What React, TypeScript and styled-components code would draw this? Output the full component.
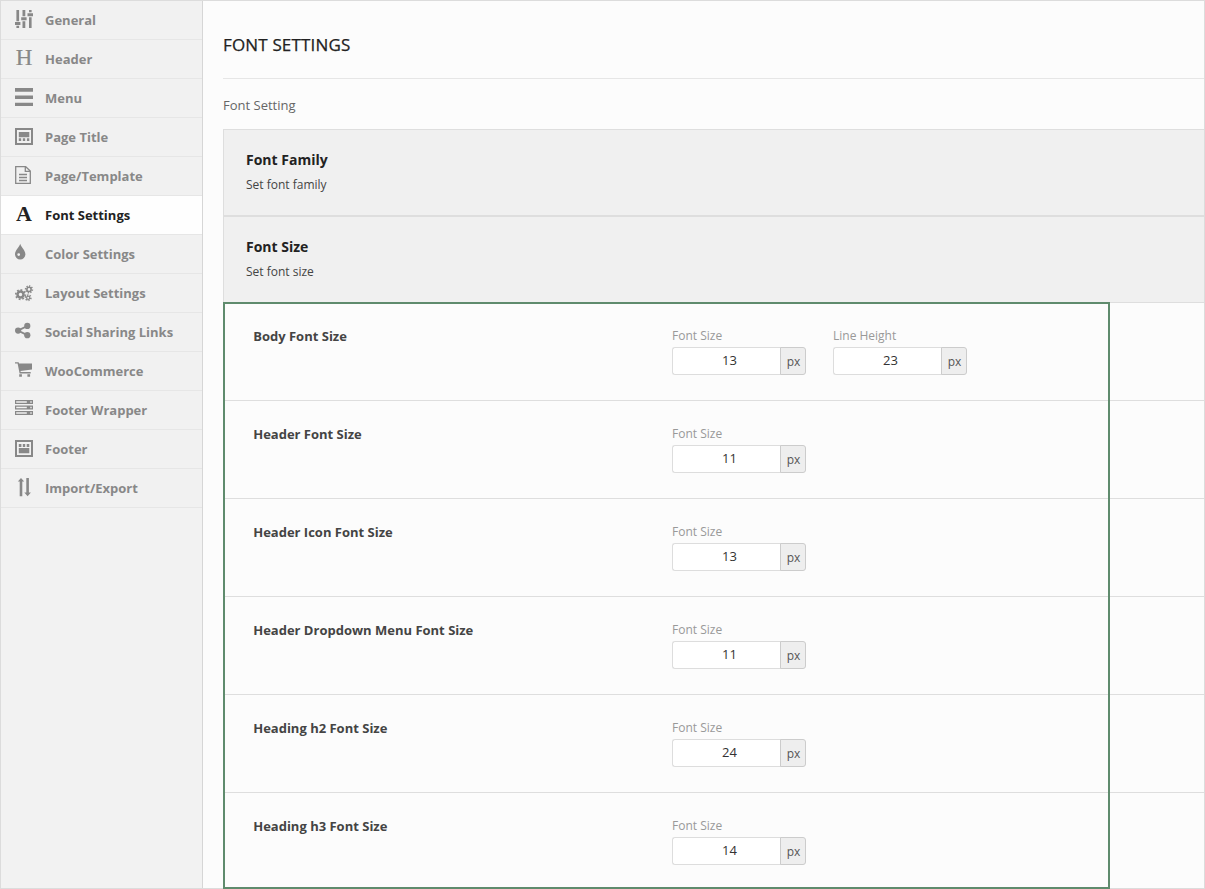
import React from 'react';
import styled, { createGlobalStyle } from 'styled-components';

const GlobalStyle = createGlobalStyle`
  * { box-sizing: border-box; }
  body {
    margin: 0;
    background: #fcfcfc;
    font-family: 'Open Sans', 'Noto Sans', sans-serif;
    overflow: hidden;
  }
`;

const Page = styled.div`
  display: flex;
  width: 1205px;
  height: 889px;
  border: 1px solid #dcdcdc;
  background: #fcfcfc;
`;

const Sidebar = styled.nav`
  flex: none;
  width: 202px;
  background: #f2f2f2;
  border-right: 1px solid #d6d6d6;
`;

const NavItem = styled.a<{ $active?: boolean }>`
  display: flex;
  height: 39px;
  padding-left: 14px;
  border-bottom: 1px solid #e6e6e6;
  background: ${p => (p.$active ? '#fefefe' : '#f1f1f1')};
  color: ${p => (p.$active ? '#222' : '#888')};
`;

const IconSlot = styled.span`
  flex: none;
  width: 30px;
  height: 38px;
  svg { display: block; }
`;

const NavLabel = styled.span`
  font-size: 13px;
  font-weight: 700;
  line-height: 38px;
  white-space: nowrap;
`;

const Main = styled.main`
  flex: 1;
  min-width: 0;
  padding-left: 20px;
`;

const Title = styled.h1`
  margin: 0;
  height: 78px;
  border-bottom: 1px solid #e6e6e6;
  color: #222;
  font-size: 17px;
  font-weight: 500;
  letter-spacing: 0.16px;
  line-height: 88px;
  -webkit-text-stroke: 0.25px currentColor;
`;

const Intro = styled.p`
  margin: 0;
  height: 50px;
  color: #666;
  font-size: 13px;
  line-height: 52px;
`;

const Section = styled.section`
  height: 87px;
  padding: 20px 22px 0;
  border: solid #dedede;
  border-width: 1px 0 1px 1px;
  background: #f0f0f0;
`;

const SectionTitle = styled.h2`
  margin: 0;
  color: #222;
  font-size: 14px;
  font-weight: 700;
  line-height: 20px;
`;

const SectionText = styled.p`
  margin: 5px 0 0;
  color: #444;
  font-size: 12px;
  line-height: 20px;
`;

const Settings = styled.div`
  position: relative;
  margin-top: -1px;
  border-top: 1px solid #dedede;
`;

const Highlight = styled.div`
  position: absolute;
  top: -1px;
  left: 0;
  width: 887px;
  height: 587px;
  border: 2px solid #5f8b6d;
  pointer-events: none;
`;

const Row = styled.div<{ $last?: boolean }>`
  display: flex;
  height: ${p => (p.$last ? 95 : 98)}px;
  padding-left: 30.2px;
  border-bottom: ${p => (p.$last ? 0 : 1)}px solid #dedede;
`;

const RowTitle = styled.h3`
  flex: none;
  width: 418.8px;
  margin: 0;
  padding-top: 23px;
  color: #444;
  font-size: 13px;
  font-weight: 700;
  line-height: 20px;
`;

const Field = styled.label`
  display: block;
  width: 134px;
  margin-right: 27px;
  padding-top: 23px;
`;

const FieldLabel = styled.span`
  display: block;
  height: 21px;
  color: #999;
  font-size: 12px;
  line-height: 20px;
`;

const Control = styled.span`
  display: flex;
  height: 28px;
`;

const Value = styled.input`
  width: 109px;
  height: 28px;
  padding: 0 0 2px 5px;
  border: 1px solid #ddd;
  border-right: 0;
  border-radius: 3px 0 0 3px;
  background: #fff;
  color: #333;
  font: 13px 'Open Sans', 'Noto Sans', sans-serif;
  text-align: center;
`;

const Unit = styled.span`
  flex: 1;
  height: 28px;
  margin-left: -1px;
  padding-left: 1px;
  border: 1px solid #ccc;
  border-radius: 0 3px 3px 0;
  background: #eee;
  color: #555;
  font-size: 12px;
  line-height: 28px;
  text-align: center;
`;

const Letter = styled.span<{ $bold?: boolean }>`
  display: block;
  width: 18px;
  font-family: 'Liberation Serif', serif;
  font-size: ${p => (p.$bold ? 22 : 23)}px;
  font-weight: ${p => (p.$bold ? 700 : 400)};
  line-height: 35px;
  text-align: center;
  -webkit-text-stroke: ${p => (p.$bold ? 0 : 0.2)}px currentColor;
`;

const Glyph = ({ children }: { children: React.ReactNode }) => (
  <svg width="20" height="38" viewBox="0 0 20 38" fill="currentColor">{children}</svg>
);

const SlidersIcon = () => (
  <Glyph>
    <path d="M1.4 9h2.7v11.2H1.4zM0 21h5.4v3H0zM1.4 24.8h2.7V27H1.4zM7.5 9h2.8v6.2H7.5zM6.2 16.2h5.4v3H6.2zM7.5 20.2h2.8V27H7.5zM14 9h2.6v2.2H14zM12.5 12.2H18v3h-5.5zM14 16.2h2.6V27H14z" />
  </Glyph>
);
const MenuIcon = () => (
  <Glyph><path d="M0 9h18v3.7H0zM0 16.6h18v3.4H0zM0 23.8h18v3.2H0z" /></Glyph>
);
const TitleIcon = () => (
  <Glyph>
    <path fillRule="evenodd" d="M0 10h18v17H0zM2 12v13h14V12z" />
    <path d="M3.8 14h10.5v5.2H3.8zM3.8 20.2h2.4V23H3.8zM7.8 20.2h2.4V23H7.8zM11.9 20.2h2.4V23h-2.4z" />
  </Glyph>
);
const FileIcon = () => (
  <Glyph>
    <path d="M.7 9.7h10L15.3 14v12.3H.7zM10.3 9.7v4.6h5M4 17.5h8M4 20.5h8M4 23.5h8" fill="none" stroke="currentColor" strokeWidth="1.3" />
  </Glyph>
);
const DropIcon = () => (
  <Glyph>
    <path fillRule="evenodd" d="M5.2 8.7C6 12.3 10.4 15.2 10.4 19.2a5.2 5.2 0 0 1-10.4 0C0 15.2 4.4 12.3 5.2 8.7zM3.7 18.2a1.4 1.4 0 1 0 0 2.8a1.4 1.4 0 0 0 0-2.8z" />
  </Glyph>
);

const Gear = ({ x, y, r, width, teeth }: { x: number; y: number; r: number; width: number; teeth: number }) => (
  <g fill="none" stroke="currentColor">
    <circle cx={x} cy={y} r={r} strokeWidth={width} />
    <circle cx={x} cy={y} r={r + width / 2 + 0.5} strokeWidth="1.6" pathLength={teeth * 2} strokeDasharray="1 1" />
  </g>
);
const CogsIcon = () => (
  <Glyph>
    <Gear x={5.5} y={20.6} r={3} width={2.5} teeth={8} />
    <Gear x={14} y={15.4} r={2.1} width={1.6} teeth={8} />
    <Gear x={13.2} y={23.8} r={1.6} width={1.2} teeth={6} />
  </Glyph>
);
const ShareIcon = () => (
  <Glyph>
    <path d="M12.3 13 2.9 17.6l9.4 4.6" fill="none" stroke="currentColor" strokeWidth="1.9" />
    <circle cx="12.3" cy="12.9" r="3.1" />
    <circle cx="3.1" cy="17.6" r="3.1" />
    <circle cx="12.3" cy="22.2" r="3.1" />
  </Glyph>
);
const CartIcon = () => (
  <Glyph>
    <path d="M0 10.3h3.6l.5 1.2H17v6L5.4 18.9l.4 1.1h9.9v1.5H4.6L2.6 11.6H0zM4.2 22.2h2.7v2.6H4.2zM12.4 22.2h2.7v2.6h-2.7z" />
  </Glyph>
);
const ServerIcon = () => (
  <Glyph>
    <path fillRule="evenodd" d="M0 9h18v4H0zM1.2 10.3v1.4h10.6v-1.4zM15.3 10.3v1.4h1.4v-1.4zM0 14.5h18v4H0zM1.2 15.8v1.4h10.6v-1.4zM15.3 15.8v1.4h1.4v-1.4zM0 20h18v4H0zM1.2 21.3v1.4h10.6v-1.4zM15.3 21.3v1.4h1.4v-1.4z" />
  </Glyph>
);
const FooterIcon = () => (
  <Glyph>
    <path fillRule="evenodd" d="M0 10h18v17H0zM2 12v13h14V12z" />
    <path d="M3.8 14h2.6v3H3.8zM7.8 14h2.4v3H7.8zM11.7 14h2.6v3h-2.6zM3.8 18h10.5v5.2H3.8z" />
  </Glyph>
);
const TransferIcon = () => (
  <Glyph>
    <path d="M6 9 9.2 12.4H7.3V27.3H4.7V12.4H2.8zM11.3 9h2.6v14.6h2L12.6 27.3 9.3 23.6h2z" />
  </Glyph>
);

const navItems: { label: string; icon: React.ReactNode; active?: boolean }[] = [
  { label: 'General', icon: <SlidersIcon /> },
  { label: 'Header', icon: <Letter>H</Letter> },
  { label: 'Menu', icon: <MenuIcon /> },
  { label: 'Page Title', icon: <TitleIcon /> },
  { label: 'Page/Template', icon: <FileIcon /> },
  { label: 'Font Settings', icon: <Letter $bold>A</Letter>, active: true },
  { label: 'Color Settings', icon: <DropIcon /> },
  { label: 'Layout Settings', icon: <CogsIcon /> },
  { label: 'Social Sharing Links', icon: <ShareIcon /> },
  { label: 'WooCommerce', icon: <CartIcon /> },
  { label: 'Footer Wrapper', icon: <ServerIcon /> },
  { label: 'Footer', icon: <FooterIcon /> },
  { label: 'Import/Export', icon: <TransferIcon /> },
];

const rows: { title: string; size: number; lineHeight?: number }[] = [
  { title: 'Body Font Size', size: 13, lineHeight: 23 },
  { title: 'Header Font Size', size: 11 },
  { title: 'Header Icon Font Size', size: 13 },
  { title: 'Header Dropdown Menu Font Size', size: 11 },
  { title: 'Heading h2 Font Size', size: 24 },
  { title: 'Heading h3 Font Size', size: 14 },
];

const PixelField = ({ label, value }: { label: string; value: number }) => (
  <Field>
    <FieldLabel>{label}</FieldLabel>
    <Control>
      <Value defaultValue={value} />
      <Unit>px</Unit>
    </Control>
  </Field>
);

export default function App() {
  return (
    <>
      <GlobalStyle />
      <Page>
        <Sidebar>
          {navItems.map(item => (
            <NavItem key={item.label} $active={item.active}>
              <IconSlot>{item.icon}</IconSlot>
              <NavLabel>{item.label}</NavLabel>
            </NavItem>
          ))}
        </Sidebar>
        <Main>
          <Title>FONT SETTINGS</Title>
          <Intro>Font Setting</Intro>
          <Section>
            <SectionTitle>Font Family</SectionTitle>
            <SectionText>Set font family</SectionText>
          </Section>
          <Section>
            <SectionTitle>Font Size</SectionTitle>
            <SectionText>Set font size</SectionText>
          </Section>
          <Settings>
            {rows.map((row, index) => (
              <Row key={row.title} $last={index === rows.length - 1}>
                <RowTitle>{row.title}</RowTitle>
                <PixelField label="Font Size" value={row.size} />
                {row.lineHeight && <PixelField label="Line Height" value={row.lineHeight} />}
              </Row>
            ))}
            <Highlight />
          </Settings>
        </Main>
      </Page>
    </>
  );
}
